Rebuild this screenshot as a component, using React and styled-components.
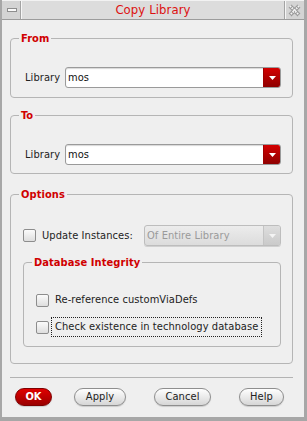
import React from 'react';
import styled, { createGlobalStyle } from 'styled-components';

const GlobalStyle = createGlobalStyle`
  html, body {
    margin: 0;
    padding: 0;
    background: #efefef;
  }
  body {
    font-family: "DejaVu Sans Condensed", "DejaVu Sans", sans-serif;
    font-stretch: condensed;
    font-size: 11px;
    letter-spacing: 0.08px;
    color: #222;
  }
`;

const Frame = styled.div`
  width: 307px;
  height: 421px;
  box-sizing: border-box;
  border-left: 2px solid #a7a7a7;
  border-right: 3px solid #a7a7a7;
  border-bottom: 4px solid #a7a7a7;
  background: #efefef;
  display: flex;
  flex-direction: column;
`;

const TitleBar = styled.div`
  display: flex;
  height: 18px;
  border-top: 1px solid #f2f2f2;
  border-bottom: 1px solid #9c9c9c;
  background: #d9d9d9;
`;

const WinButton = styled.div`
  width: 17px;
  display: flex;
  align-items: center;
  justify-content: center;
  background: #d4d4d4;
  border-left: 1px solid ${p => (p.$right ? '#f6f6f6' : 'transparent')};
  border-right: 1px solid ${p => (p.$right ? 'transparent' : '#a3a3a3')};
`;

const MinGlyph = styled.div`
  width: 8px;
  height: 2px;
  background: #fafafa;
  border: 1px solid #8e8e8e;
`;

const TitleText = styled.div`
  flex: 1;
  text-align: center;
  line-height: 18px;
  font-size: 13px;
  color: #dd1111;
  border-left: 1px solid #f6f6f6;
  border-right: 1px solid #a3a3a3;
  background: #dcdcdc;
`;

const Body = styled.div`
  flex: 1;
  display: flex;
  flex-direction: column;
  padding: 12px 11px 0 8px;
`;

const Group = styled.div`
  display: flex;
  flex-direction: column;
  margin-top: ${p => p.$mt || 0}px;
`;

const GroupTitle = styled.div`
  position: relative;
  z-index: 1;
  align-self: flex-start;
  margin-left: 9px;
  padding: 0 2px;
  background: #efefef;
  line-height: 13px;
  font-weight: bold;
  color: #d00000;
`;

const GroupBox = styled.div`
  margin-top: -7px;
  border: 1px solid #b5b5b5;
  border-radius: 4px;
  padding: ${p => p.$pad};
  display: flex;
  flex-direction: column;
`;

const FieldRow = styled.div`
  display: flex;
  align-items: center;
  height: 21px;
`;

const FieldLabel = styled.span`
  width: 40px;
`;

const Combo = styled.div`
  height: 21px;
  box-sizing: border-box;
  display: flex;
  border: 1px solid ${p => (p.$disabled ? '#bdbdbd' : '#9a9a9a')};
  border-radius: 3px;
  background: ${p => (p.$disabled ? 'linear-gradient(#ececec, #dcdcdc)' : '#fff')};
  box-shadow: ${p => (p.$disabled ? '0 1px 0 #d0d0d0' : 'inset 0 1px 1px #d8d8d8')};
  overflow: hidden;
  flex: ${p => (p.$width ? `0 0 ${p.$width}px` : '1')};
  margin-left: ${p => (p.$width ? 'auto' : '0')};
`;

const ComboText = styled.span`
  flex: 1;
  padding-left: 2px;
  line-height: 19px;
  color: ${p => (p.$disabled ? '#9a9a9a' : '#111')};
`;

const ComboArrow = styled.div`
  width: 16px;
  display: flex;
  align-items: center;
  justify-content: center;
  background: ${p => (p.$disabled ? 'linear-gradient(#dedede, #cacaca)' : 'linear-gradient(#d40000, #8e0000)')};
  border-left: 1px solid ${p => (p.$disabled ? '#c4c4c4' : '#a00000')};
`;

const Arrow = ({ color }) => (
  <svg width="7" height="4" viewBox="0 0 7 4">
    <polygon points="0,0 7,0 3.5,4" fill={color} />
  </svg>
);

const CheckRow = styled.div`
  display: flex;
  align-items: center;
  height: ${p => p.$h || 20}px;
  margin-top: ${p => p.$mt || 0}px;
`;

const Box = styled.div`
  width: 13px;
  height: 13px;
  box-sizing: border-box;
  border: 1px solid #8d8d8d;
  border-radius: 2px;
  background: linear-gradient(#fbfbfb, #dedede);
  margin-right: 2px;
  flex: none;
`;

const CheckLabel = styled.span`
  padding: 0 3px;
  line-height: 18px;
  border: 1px dotted ${p => (p.$focus ? '#222' : 'transparent')};
  white-space: nowrap;
`;

const Separator = styled.div`
  height: 1px;
  background: #b3b3b3;
  margin-top: 13px;
`;

const ButtonRow = styled.div`
  display: flex;
  margin-top: 10px;
`;

const Button = styled.button`
  height: 18px;
  width: ${p => p.$w}px;
  margin-left: ${p => p.$ml}px;
  padding: 0;
  border-radius: 9px;
  font-family: inherit;
  font-stretch: condensed;
  font-size: 11px;
  letter-spacing: 0.08px;
  line-height: 16px;
  border: 1px solid ${p => (p.$primary ? '#7e0000' : '#8e8e8e')};
  background: ${p => (p.$primary ? 'linear-gradient(#e00000, #9a0000)' : 'linear-gradient(#fefefe, #d6d6d6)')};
  color: ${p => (p.$primary ? '#fff' : '#222')};
  font-weight: ${p => (p.$primary ? 'bold' : 'normal')};
  box-shadow: 0 1px 1px rgba(0, 0, 0, 0.15);
`;

const CloseGlyph = () => (
  <svg width="13" height="13" viewBox="0 0 13 13">
    <path d="M2 2 L11 11 M11 2 L2 11" stroke="#9a9a9a" strokeWidth="4" />
    <path d="M2 2 L11 11 M11 2 L2 11" stroke="#f4f4f4" strokeWidth="2" strokeDasharray="1.5 1" />
  </svg>
);

const LibraryField = ({ value }) => (
  <FieldRow>
    <FieldLabel>Library</FieldLabel>
    <Combo>
      <ComboText>{value}</ComboText>
      <ComboArrow>
        <Arrow color="#fff" />
      </ComboArrow>
    </Combo>
  </FieldRow>
);

export default function App() {
  return (
    <Frame>
      <GlobalStyle />
      <TitleBar>
        <WinButton>
          <MinGlyph />
        </WinButton>
        <TitleText>Copy Library</TitleText>
        <WinButton $right>
          <CloseGlyph />
        </WinButton>
      </TitleBar>
      <Body>
        <Group>
          <GroupTitle>From</GroupTitle>
          <GroupBox $pad="28px 11px 9px 14px">
            <LibraryField value="mos" />
          </GroupBox>
        </Group>
        <Group $mt={11}>
          <GroupTitle>To</GroupTitle>
          <GroupBox $pad="28px 11px 8px 14px">
            <LibraryField value="mos" />
          </GroupBox>
        </Group>
        <Group $mt={14}>
          <GroupTitle>Options</GroupTitle>
          <GroupBox $pad="30px 11px 16px 12px">
            <CheckRow $h={21}>
              <Box />
              <CheckLabel>Update Instances:</CheckLabel>
              <Combo $disabled $width={137}>
                <ComboText $disabled>Of Entire Library</ComboText>
                <ComboArrow $disabled>
                  <Arrow color="#f4f4f4" />
                </ComboArrow>
              </Combo>
            </CheckRow>
            <Group $mt={10}>
              <GroupTitle>Database Integrity</GroupTitle>
              <GroupBox $pad="27px 12px 9px 12px">
                <CheckRow>
                  <Box />
                  <CheckLabel>Re-reference customViaDefs</CheckLabel>
                </CheckRow>
                <CheckRow $mt={7}>
                  <Box />
                  <CheckLabel $focus>Check existence in technology database</CheckLabel>
                </CheckRow>
              </GroupBox>
            </Group>
          </GroupBox>
        </Group>
        <Separator />
        <ButtonRow>
          <Button $primary $w={37} $ml={5}>OK</Button>
          <Button $w={52} $ml={22}>Apply</Button>
          <Button $w={57} $ml={28}>Cancel</Button>
          <Button $w={45} $ml={28}>Help</Button>
        </ButtonRow>
      </Body>
    </Frame>
  );
}
